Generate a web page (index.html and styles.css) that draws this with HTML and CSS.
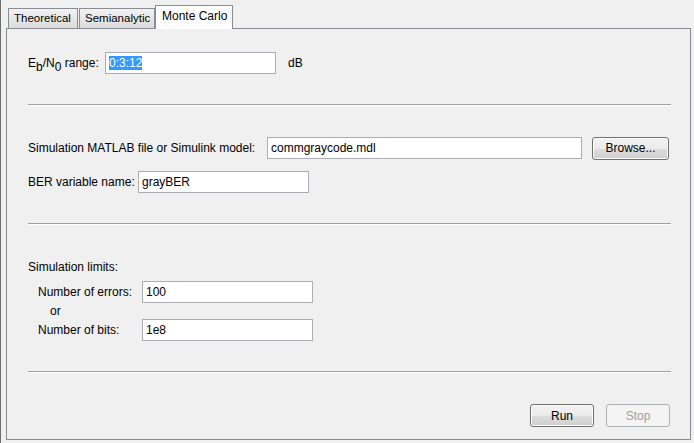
FILE: index.html
```html
<!DOCTYPE html>
<html lang="en">
<head>
  <meta charset="UTF-8">
  <title>BER Analysis - Monte Carlo</title>
  <link rel="stylesheet" href="styles.css">
</head>
<body>
  <div class="window">
    <div class="tabs">
      <div class="tab w-theo">Theoretical</div>
      <div class="tab w-semi">Semianalytic</div>
      <div class="tab active">Monte Carlo</div>
    </div>

    <div class="panel">
      <div class="row first">
        <span class="label w-ebno">E<sub>b</sub>/N<sub>0</sub> range:</span>
        <div class="field w-short"><span class="selected">0:3:12</span></div>
        <span class="unit">dB</span>
      </div>

      <div class="separator"></div>

      <div class="row sim">
        <span class="label w-sim">Simulation MATLAB file or Simulink model:</span>
        <div class="field w-file">commgraycode.mdl</div>
        <button class="btn browse">Browse...</button>
      </div>

      <div class="row ber">
        <span class="label w-ber">BER variable name:</span>
        <div class="field w-short">grayBER</div>
      </div>

      <div class="separator"></div>

      <div class="limits-title">Simulation limits:</div>

      <div class="row limit errors">
        <span class="label w-limit">Number of errors:</span>
        <div class="field w-short">100</div>
      </div>
      <div class="or">or</div>
      <div class="row limit bits">
        <span class="label w-limit">Number of bits:</span>
        <div class="field w-short">1e8</div>
      </div>

      <div class="separator"></div>

      <div class="actions">
        <button class="btn">Run</button>
        <button class="btn" disabled>Stop</button>
      </div>
    </div>
  </div>
</body>
</html>
```

FILE: styles.css
```css
body {
  margin: 0;
  background: #f0f0f0;
  font-family: "Liberation Sans", Arial, sans-serif;
  font-size: 12px;
  color: #000;
}

.window {
  height: 443px;
  box-sizing: border-box;
  border-left: 1px solid #6e6e6e;
  padding-top: 6px;
}

/* tab strip */
.tabs {
  display: flex;
  align-items: flex-end;
  height: 22px;
  margin-left: 7px;
}

.tab {
  box-sizing: border-box;
  height: 20px;
  line-height: 19px;
  padding: 0 4px 0 5px;
  margin-right: 1px;
  border: 1px solid #898c95;
  border-bottom: none;
  background: linear-gradient(#f2f2f2, #dcdcdc);
  font-size: 11.5px;
  white-space: nowrap;
}

.w-theo { width: 70px; }
.w-semi { width: 76px; }

.tab.active {
  position: relative;
  z-index: 1;
  width: 78px;
  height: 24px;
  line-height: 21px;
  margin-left: -1px;
  margin-bottom: -1px;
  padding: 0 6px;
  font-size: 12px;
  background: #fff;
}

.panel {
  width: 685px;
  height: 412px;
  box-sizing: border-box;
  margin-left: 5px;
  border: 1px solid #898c95;
  padding: 0 19px 0 21px;
}

.separator {
  border-top: 1px solid #a0a0a0;
  border-bottom: 1px solid #fff;
}

/* form rows */
.row {
  display: flex;
  align-items: center;
  height: 22px;
}

.row.first { margin-top: 23px; margin-bottom: 30px; }
.row.sim { margin-top: 31px; }
.row.ber { margin-top: 12px; margin-bottom: 30px; }

.label {
  flex: none;
}

.label sub {
  font-size: 12px;
  vertical-align: -4px;
  line-height: 0;
}

.w-ebno { width: 77px; }
.w-sim { width: 239px; }
.w-ber { width: 110px; }
.w-limit { width: 104px; }

.field {
  height: 22px;
  box-sizing: border-box;
  border: 1px solid #abadb3;
  background: #fff;
  padding: 0 3px;
  line-height: 20px;
  white-space: nowrap;
}

.w-short { width: 171px; }
.w-file { width: 315px; }

.selected {
  background: #3399ff;
  color: #fff;
}

.unit {
  margin-left: 12px;
}

.limits-title {
  margin-top: 34px;
  height: 16px;
  line-height: 16px;
}

.row.limit { padding-left: 10px; }
.row.errors { margin-top: 6px; }

.or {
  height: 16px;
  line-height: 16px;
  padding-left: 22px;
}

.row.bits { margin-bottom: 30px; }

/* push buttons */
.btn {
  width: 64px;
  height: 23px;
  padding: 0;
  border: 1px solid #707070;
  border-radius: 3px;
  background: linear-gradient(#f2f2f2 0%, #ebebeb 50%, #dddddd 50%, #cfcfcf 100%);
  box-shadow: inset 0 0 0 1px #fcfcfc;
  font-family: inherit;
  font-size: 12px;
  color: #000;
}

.btn:disabled {
  border-color: #adb2b5;
  background: #f4f4f4;
  box-shadow: none;
  color: #a0a0a0;
}

.browse {
  width: 77px;
  margin-left: 10px;
}

.actions {
  display: flex;
  justify-content: flex-end;
  gap: 12px;
  margin-top: 31px;
  padding-right: 1px;
}
```
